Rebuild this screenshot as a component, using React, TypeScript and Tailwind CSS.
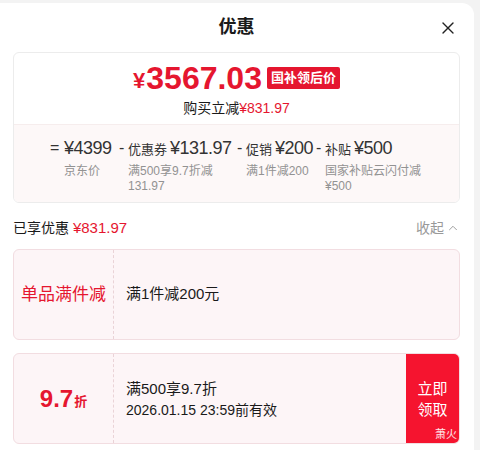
import { X, ChevronUp } from "lucide-react";

const font = { fontFamily: '"Liberation Sans", "Noto Sans CJK SC", sans-serif' };

type Part = { label?: string; value: string; sub: string[]; w: string };

const parts: Part[] = [
  { value: "¥4399", sub: ["京东价"], w: "w-[54px]" },
  { label: "优惠券", value: "¥131.97", sub: ["满500享9.7折减", "131.97"], w: "w-[108px]" },
  { label: "促销", value: "¥200", sub: ["满1件减200"], w: "w-[69px]" },
  { label: "补贴", value: "¥500", sub: ["国家补贴云闪付减", "¥500"], w: "w-[110px]" },
];

export default function App() {
  return (
    <div className="h-[450px] w-[480px] bg-[#f3f3f3] pt-[3px] pr-[6px] overflow-hidden" style={font}>
      <div className="h-full bg-white rounded-tr-[12px] pr-[14px] pl-[13px]">
        {/* Header */}
        <div className="relative h-[49px] flex items-center justify-center">
          <span className="text-[18px] font-bold text-[#1a1a1a]">优惠</span>
          <X className="absolute right-[2px] top-[15px] w-[20px] h-[20px] text-[#222]" strokeWidth={1.6} />
        </div>

        {/* Price card */}
        <div className="border border-[#ececec] rounded-[6px] overflow-hidden">
          <div className="h-[71px] flex flex-col items-center pt-[7px]">
            <div className="flex items-center">
              <span className="text-[#e5162f] font-bold text-[22px] leading-none mt-[6px] mr-[1px]">¥</span>
              <span className="text-[#e5162f] font-bold text-[32px] leading-[36px]">3567.03</span>
              <span className="ml-[5px] bg-[#e5162f] text-white text-[13px] font-bold leading-[22px] px-[4px] rounded-[2px]">国补领后价</span>
            </div>
            <div className="text-[14px] leading-[18px] text-[#1a1a1a] mt-[3px]">
              购买立减<span className="text-[#e5162f]">¥831.97</span>
            </div>
          </div>
          <div className="bg-[#fdf8f8] h-[78px] border-t border-[#f6eded] flex pl-[36px] pt-[11px] text-[#333]">
            {parts.map((p, i) => (
              <div key={i} className="flex">
                <span className={`text-[16px] leading-[24px] ${i === 0 ? "w-[14px]" : "w-[10px] pl-[1px]"}`}>
                  {i === 0 ? "=" : "-"}
                </span>
                <div className={p.w}>
                  <div className="flex items-baseline whitespace-nowrap">
                    {p.label && <span className="text-[13px] mr-[3px]">{p.label}</span>}
                    <span className="text-[18px] leading-[24px] tracking-[-0.5px]">{p.value}</span>
                  </div>
                  <div className="text-[12px] leading-[15px] text-[#929292] mt-[4px]">
                    {p.sub.map((s) => (
                      <div key={s}>{s}</div>
                    ))}
                  </div>
                </div>
              </div>
            ))}
          </div>
        </div>

        {/* Enjoyed */}
        <div className="h-[46px] pt-[4px] flex items-center justify-between">
          <div className="text-[14px] text-[#1a1a1a]">
            已享优惠 <span className="text-[#e5162f] text-[15px]">¥831.97</span>
          </div>
          <div className="flex items-center text-[14px] text-[#999]">
            收起
            <ChevronUp className="w-[14px] h-[14px] ml-[2px]" strokeWidth={1.6} />
          </div>
        </div>

        {/* Coupon 1 */}
        <div className="h-[91px] flex bg-[#fdf5f7] border border-[#f2dde1] rounded-[6px]">
          <div className="w-[100px] flex items-center justify-center border-r border-dashed border-[#ead3d7]">
            <span className="text-[17px] text-[#e5162f]">单品满件减</span>
          </div>
          <div className="flex items-center pl-[12px] text-[15px] text-[#1a1a1a]">满1件减200元</div>
        </div>

        {/* Coupon 2 */}
        <div className="mt-[13px] h-[91px] flex bg-[#fdf5f7] border border-[#f2dde1] rounded-[6px] overflow-hidden">
          <div className="w-[100px] flex items-center justify-center border-r border-dashed border-[#ead3d7]">
            <span className="text-[#e5162f] font-bold text-[24px] leading-none">9.7</span>
            <span className="text-[#e5162f] font-bold text-[13px] mt-[6px] ml-[1px]">折</span>
          </div>
          <div className="flex-1 flex flex-col justify-center pl-[12px] text-[#1a1a1a]">
            <div className="text-[15px] leading-[22px]">满500享9.7折</div>
            <div className="text-[14px] leading-[20px]">2026.01.15 23:59前有效</div>
          </div>
          <div className="relative w-[53px] bg-[#f5142f] flex items-center justify-center">
            <div className="text-white text-[15px] leading-[21px] text-center w-[32px]">立即领取</div>
            <span className="absolute right-[2px] bottom-[1px] text-[11px] text-white/90">萧火</span>
          </div>
        </div>
      </div>
    </div>
  );
}
